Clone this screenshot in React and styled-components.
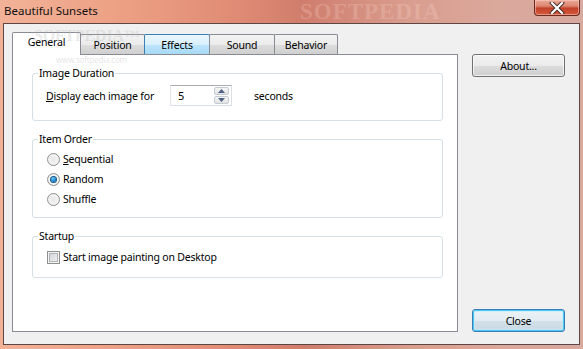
import React from "react";
import styled, { createGlobalStyle, css } from "styled-components";

const GlobalStyle = createGlobalStyle`
  * { box-sizing: border-box; }
  body {
    margin: 0;
    font-family: "Noto Sans", "Open Sans", sans-serif;
    font-size: 10.5px;
    letter-spacing: -0.2px;
    color: #000;
  }
`;

const App = () => {
  return (
    <>
      <GlobalStyle />
      <S.Window>
        <S.TitleBar>
          <S.Title>Beautiful Sunsets</S.Title>
          <S.TitleMark>SOFTPEDIA</S.TitleMark>
          <S.CloseBox>
            <svg width="16" height="12" viewBox="0 0 16 12">
              <path
                d="M3 1 L13 11 M13 1 L3 11"
                stroke="#3d2a28"
                strokeWidth="4"
                strokeLinecap="square"
              />
              <path
                d="M3 1 L13 11 M13 1 L3 11"
                stroke="#ffffff"
                strokeWidth="2.2"
                strokeLinecap="square"
              />
            </svg>
          </S.CloseBox>
        </S.TitleBar>

        <S.Client>
          <S.TabControl>
            <S.WaterMark>SOFTPEDIA™</S.WaterMark>
            <S.WaterUrl>www.softpedia.com</S.WaterUrl>
            <S.TabStrip>
              <S.Tab $w={69} $active>General</S.Tab>
              <S.Tab $w={65}>Position</S.Tab>
              <S.Tab $w={66} $hover>Effects</S.Tab>
              <S.Tab $w={66}>Sound</S.Tab>
              <S.Tab $w={64}>Behavior</S.Tab>
            </S.TabStrip>

            <S.Panel>
              <S.Group $pt={5} $pb={14}>
                <S.Legend>Image Duration</S.Legend>
                <S.Row>
                  <S.FieldLabel>
                    <u>D</u>isplay each image for
                  </S.FieldLabel>
                  <S.Spinner>
                    <S.SpinValue>5</S.SpinValue>
                    <S.SpinButtons>
                      <S.SpinBtn>
                        <svg width="7" height="4" viewBox="0 0 7 4">
                          <path d="M0 4 L3.5 0 L7 4 Z" fill="#4d6185" />
                        </svg>
                      </S.SpinBtn>
                      <S.SpinBtn>
                        <svg width="7" height="4" viewBox="0 0 7 4">
                          <path d="M0 0 L3.5 4 L7 0 Z" fill="#4d6185" />
                        </svg>
                      </S.SpinBtn>
                    </S.SpinButtons>
                  </S.Spinner>
                  <S.Unit>seconds</S.Unit>
                </S.Row>
              </S.Group>

              <S.Group $pt={3} $pb={8}>
                <S.Legend>Item Order</S.Legend>
                <S.Option>
                  <S.Radio />
                  <span>
                    <u>S</u>equential
                  </span>
                </S.Option>
                <S.Option>
                  <S.Radio $checked />
                  <span>Random</span>
                </S.Option>
                <S.Option>
                  <S.Radio />
                  <span>Shuffle</span>
                </S.Option>
              </S.Group>

              <S.Group $pt={4} $pb={10}>
                <S.Legend>Startup</S.Legend>
                <S.Option>
                  <S.Check />
                  <span>Start image painting on Desktop</span>
                </S.Option>
              </S.Group>
            </S.Panel>
          </S.TabControl>

          <S.Side>
            <S.Button>About...</S.Button>
            <S.Button $default>Close</S.Button>
          </S.Side>
        </S.Client>
      </S.Window>
    </>
  );
};

const S = {
  Window: styled.div`
    width: 583px;
    height: 349px;
    display: flex;
    flex-direction: column;
    background: linear-gradient(
      90deg,
      #f2b298 0%,
      #eda184 20%,
      #e08c75 40%,
      #d07d6d 52%,
      #d99d8e 70%,
      #dba89c 85%,
      #d7a99f 100%
    );
    overflow: hidden;
  `,
  TitleBar: styled.div`
    position: relative;
    height: 23px;
    display: flex;
    align-items: flex-start;
    justify-content: space-between;
    padding-left: 4px;
  `,
  Title: styled.div`
    font-size: 11.5px;
    line-height: 22px;
    letter-spacing: 0;
    color: #111;
  `,
  TitleMark: styled.div`
    position: absolute;
    left: 300px;
    top: 1px;
    font-family: "Liberation Serif", serif;
    font-weight: bold;
    font-size: 23px;
    line-height: 22px;
    letter-spacing: 1px;
    color: rgba(255, 225, 215, 0.22);
    pointer-events: none;
  `,
  CloseBox: styled.div`
    width: 46px;
    height: 16px;
    margin-right: 3px;
    border: 1px solid #6b2a22;
    border-top: none;
    border-radius: 0 0 4px 4px;
    background: linear-gradient(
      180deg,
      #eaa996 0%,
      #dc8670 40%,
      #c2422a 55%,
      #d5593c 100%
    );
    box-shadow: inset 0 0 0 1px rgba(255, 210, 200, 0.5);
    display: flex;
    align-items: center;
    justify-content: center;
  `,
  Client: styled.div`
    flex: 1;
    margin: 0 3px 4px 3px;
    border: 1px solid #5e4644;
    background: #f0f0f0;
    display: flex;
    gap: 14px;
    padding: 8px 14px 12px 8px;
  `,
  TabControl: styled.div`
    position: relative;
    width: 446px;
    display: flex;
    flex-direction: column;
  `,
  WaterMark: styled.div`
    position: absolute;
    left: 22px;
    top: -5px;
    font-family: "Liberation Serif", serif;
    font-weight: bold;
    font-size: 16px;
    color: rgba(185, 185, 185, 0.3);
    pointer-events: none;
    z-index: 3;
  `,
  WaterUrl: styled.div`
    position: absolute;
    left: 44px;
    top: 22px;
    font-size: 8px;
    color: rgba(190, 190, 190, 0.4);
    pointer-events: none;
    z-index: 3;
  `,
  TabStrip: styled.div`
    height: 22px;
    display: flex;
    align-items: flex-end;
    position: relative;
    z-index: 1;
  `,
  Tab: styled.div`
    width: ${(p) => p.$w}px;
    height: 20px;
    margin-left: -1px;
    border: 1px solid #898c95;
    border-bottom: none;
    border-radius: 2px 2px 0 0;
    display: flex;
    align-items: center;
    justify-content: center;
    background: linear-gradient(180deg, #f3f3f3 0%, #ebebeb 50%, #dddddd 51%, #cfcfcf 100%);
    &:first-child {
      margin-left: 0;
    }
    ${(p) =>
      p.$hover &&
      css`
        border-color: #3c7fb1;
        background: linear-gradient(180deg, #eaf6fd 0%, #d9f0fc 50%, #bee6fd 51%, #a7d9f5 100%);
      `}
    ${(p) =>
      p.$active &&
      css`
        height: 23px;
        margin-bottom: -1px;
        padding-bottom: 4px;
        background: #ffffff;
      `}
  `,
  Panel: styled.div`
    flex: 1;
    background: #ffffff;
    border: 1px solid #898c95;
    padding: 11px 14px 0 19px;
    display: flex;
    flex-direction: column;
    gap: 11px;
  `,
  Group: styled.fieldset`
    margin: 0;
    min-width: 0;
    border: 1px solid #d5dfe5;
    border-radius: 3px;
    padding: ${(p) => p.$pt}px 8px ${(p) => p.$pb}px 13px;
  `,
  Legend: styled.legend`
    margin-left: -8px;
    padding: 0 1px;
    line-height: 14px;
  `,
  Row: styled.div`
    display: flex;
    align-items: center;
    height: 21px;
  `,
  FieldLabel: styled.div`
    width: 124px;
  `,
  Spinner: styled.div`
    width: 62px;
    height: 21px;
    border: 1px solid #dbdfe6;
    border-top-color: #abadb3;
    border-left-color: #e2e3ea;
    display: flex;
    align-items: center;
    justify-content: space-between;
    padding: 1px 2px 1px 7px;
  `,
  SpinValue: styled.span`
    font-size: 11px;
  `,
  SpinButtons: styled.div`
    display: flex;
    flex-direction: column;
    gap: 1px;
  `,
  SpinBtn: styled.div`
    width: 15px;
    height: 8px;
    border: 1px solid #c6cbd3;
    border-radius: 2px;
    background: linear-gradient(180deg, #f6f6f6, #e3e3e3);
    display: flex;
    align-items: center;
    justify-content: center;
  `,
  Unit: styled.div`
    margin-left: 22px;
  `,
  Option: styled.div`
    display: flex;
    align-items: center;
    height: 20px;
    gap: 3px;
  `,
  Radio: styled.span`
    width: 13px;
    height: 13px;
    margin-left: 1px;
    border-radius: 50%;
    border: 1px solid #8e8f8f;
    background: radial-gradient(circle at 50% 50%, #e6e6e6 0%, #f4f4f4 60%, #d0d0d0 100%);
    display: flex;
    align-items: center;
    justify-content: center;
    &::after {
      content: "";
      width: 5px;
      height: 5px;
      border-radius: 50%;
      display: ${(p) => (p.$checked ? "block" : "none")};
      background: radial-gradient(circle at 40% 35%, #7fd4ff 0%, #1a8fd6 45%, #0a4f8f 100%);
      box-shadow: 0 0 0 1px #1b5a8a;
    }
  `,
  Check: styled.span`
    width: 13px;
    height: 13px;
    margin-left: 1px;
    border: 1px solid #8e8f8f;
    box-shadow: inset 0 0 0 1px #f4f4f4, inset 0 0 0 2px #b3b3b3;
    background-image: linear-gradient(135deg, #cbcfd5, #f6f6f6);
  `,
  Side: styled.div`
    width: 93px;
    padding-top: 22px;
    display: flex;
    flex-direction: column;
    justify-content: space-between;
  `,
  Button: styled.div`
    height: 23px;
    border: 1px solid #707070;
    border-radius: 3px;
    display: flex;
    align-items: center;
    justify-content: center;
    background: linear-gradient(180deg, #f2f2f2 0%, #ebebeb 50%, #dddddd 51%, #cfcfcf 100%);
    box-shadow: inset 0 0 0 1px rgba(255, 255, 255, 0.7);
    ${(p) =>
      p.$default &&
      css`
        border-color: #3c7fb1;
        background: linear-gradient(180deg, #ecf3f7 0%, #e2ecf2 50%, #d2e0e9 51%, #c9d9e3 100%);
        box-shadow: inset 0 0 0 1px #48c8f8, inset 0 0 0 2px rgba(190, 235, 255, 0.6);
      `}
  `,
};

export default App;
